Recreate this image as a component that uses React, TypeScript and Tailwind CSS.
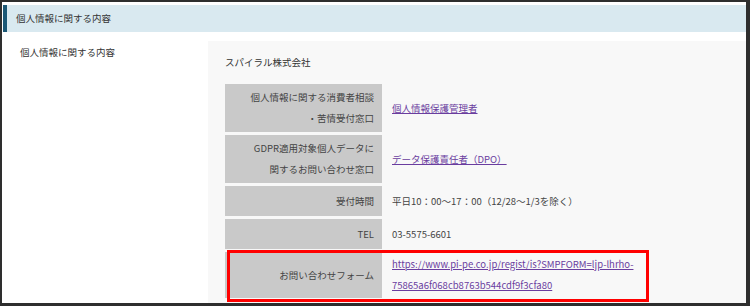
const font = { fontFamily: '"Noto Sans CJK JP", "Noto Sans", sans-serif' }

function Label({ children }: { children: React.ReactNode }) {
  return (
    <div className="bg-[#c9c9c9] text-[#444] text-right pr-[8px] py-[3px] leading-[21px] flex flex-col justify-center min-h-[30px]">
      {children}
    </div>
  )
}

function Value({ children }: { children: React.ReactNode }) {
  return <div className="pl-[10px] leading-[21px] flex flex-col justify-center text-[#444]">{children}</div>
}

export default function App() {
  return (
    <div
      className="w-[750px] h-[306px] bg-[#2e2e2e] pt-[2px] pl-[2px] pr-[4px] pb-[3px] overflow-hidden text-[9.5px]"
      style={font}
    >
      <div className="h-full bg-white flex flex-col">
        <div className="mt-[3px] ml-[1px] h-[27px] bg-[#d9e9f0] border-l-[4px] border-[#1c5876] flex items-center pl-[9px] text-[#333]">
          個人情報に関する内容
        </div>
        <div className="flex flex-1 mt-[9px]">
          <div className="w-[206px] pl-[18px] pt-[1px] text-[#333] leading-[20px]">個人情報に関する内容</div>
          <div className="flex-1 bg-[#f8f8f8] pl-[17px] pt-[11px]">
            <div className="text-[#333] leading-[20px]">スパイラル株式会社</div>
            <div className="mt-[12px] w-[422px] grid grid-cols-[157px_1fr] gap-y-[3px]">
              <Label>
                <span>個人情報に関する消費者相談</span>
                <span>・苦情受付窓口</span>
              </Label>
              <Value>
                <span className="text-[#6a3d9f] underline">個人情報保護管理者</span>
              </Value>
              <Label>
                <span>GDPR適用対象個人データに</span>
                <span>関するお問い合わせ窓口</span>
              </Label>
              <Value>
                <span className="text-[#6a3d9f] underline">データ保護責任者（DPO）</span>
              </Value>
              <Label>受付時間</Label>
              <Value>平日10：00～17：00（12/28～1/3を除く）</Value>
              <Label>TEL</Label>
              <Value>03-5575-6601</Value>
              <div className="relative col-span-2 grid grid-cols-[157px_1fr]">
                <div className="bg-[#c9c9c9] text-[#444] text-right pr-[8px] flex items-center justify-end h-[46px]">
                  お問い合わせフォーム
                </div>
                <Value>
                  <span className="text-[#6a3d9f] underline">
                    https://www.pi-pe.co.jp/regist/is?SMPFORM=ljp-lhrho-
                    <br />
                    75865a6f068cb8763b544cdf9f3cfa80
                  </span>
                </Value>
                <div className="absolute -top-[2px] left-[2px] -right-[2px] h-[52px] border-[3px] border-[#ff0000]" />
              </div>
            </div>
          </div>
        </div>
      </div>
    </div>
  )
}
